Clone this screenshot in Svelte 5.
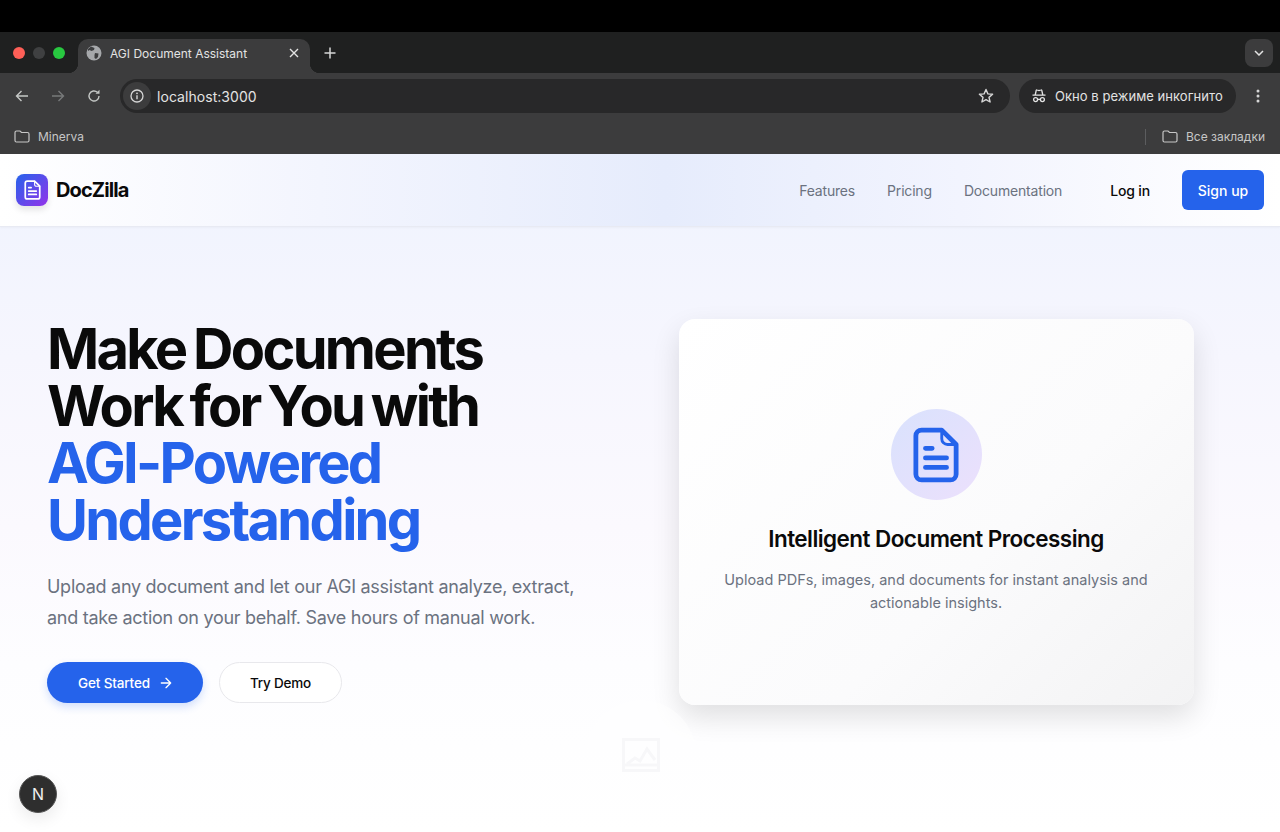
<script>
  const navLinks = ['Features', 'Pricing', 'Documentation'];
</script>

<div class="window">
  <div class="topbar"></div>

  <div class="tabstrip">
    <div class="lights">
      <span class="light red"></span>
      <span class="light grey"></span>
      <span class="light green"></span>
    </div>
    <div class="tab">
      <svg class="globe" width="16" height="16" viewBox="0 0 16 16">
        <circle cx="8" cy="8" r="7.5" fill="#a6a8ab" />
        <path d="M5 1.5 L8.5 3 L8 5 L5.5 6 L3.5 5 L2 6 L2 4 Z M9 8 L12.5 8.5 L12 12 L10 14 L8.5 13 L8.5 10 Z" fill="#3c3d3f" />
      </svg>
      <span class="tab-title">AGI Document Assistant</span>
      <svg class="tab-close" width="10" height="10" viewBox="0 0 10 10">
        <path d="M1 1 L9 9 M9 1 L1 9" stroke="#e3e3e3" stroke-width="1.4" fill="none" />
      </svg>
    </div>
    <svg class="new-tab" width="12" height="12" viewBox="0 0 12 12">
      <path d="M6 0.5 V11.5 M0.5 6 H11.5" stroke="#d6d6d6" stroke-width="1.5" fill="none" />
    </svg>
    <div class="tab-search">
      <svg width="10" height="6" viewBox="0 0 10 6">
        <path d="M1 1 L5 5 L9 1" stroke="#e3e3e3" stroke-width="1.5" fill="none" />
      </svg>
    </div>
  </div>

  <div class="toolbar">
    <svg class="tool" width="14" height="14" viewBox="0 0 14 14">
      <path d="M13 7 H1.5 M6.5 2 L1.5 7 L6.5 12" stroke="#c4c7c5" stroke-width="1.4" fill="none" />
    </svg>
    <svg class="tool" width="14" height="14" viewBox="0 0 14 14">
      <path d="M1 7 H12.5 M7.5 2 L12.5 7 L7.5 12" stroke="#77797a" stroke-width="1.4" fill="none" />
    </svg>
    <svg class="tool" width="14" height="14" viewBox="0 0 14 14">
      <path d="M12 7 A5 5 0 1 1 10.4 3.3" stroke="#c4c7c5" stroke-width="1.4" fill="none" />
      <path d="M12.5 0.8 V4.8 H8.5 Z" fill="#c4c7c5" />
    </svg>
    <div class="omnibox">
      <span class="info">
        <svg width="14" height="14" viewBox="0 0 14 14">
          <circle cx="7" cy="7" r="6" stroke="#d6d6d6" stroke-width="1.3" fill="none" />
          <path d="M7 6.2 V10.2" stroke="#d6d6d6" stroke-width="1.4" />
          <circle cx="7" cy="4.3" r="0.9" fill="#d6d6d6" />
        </svg>
      </span>
      <span class="url">localhost:3000</span>
      <svg class="star" width="16" height="16" viewBox="0 0 16 16">
        <path d="M8 1.5 L9.9 5.9 L14.6 6.3 L11 9.4 L12.1 14 L8 11.6 L3.9 14 L5 9.4 L1.4 6.3 L6.1 5.9 Z" stroke="#d6d6d6" stroke-width="1.4" fill="none" stroke-linejoin="round" />
      </svg>
    </div>
    <div class="incognito">
      <svg width="14" height="14" viewBox="0 0 14 14">
        <path d="M3.2 6 L4.2 1.5 Q4.4 0.8 5 1 L7 1.6 L9 1 Q9.6 0.8 9.8 1.5 L10.8 6 M0.5 6.2 H13.5" stroke="#e3e3e3" stroke-width="1.3" fill="none" />
        <circle cx="3.6" cy="10.6" r="2" stroke="#e3e3e3" stroke-width="1.3" fill="none" />
        <circle cx="10.4" cy="10.6" r="2" stroke="#e3e3e3" stroke-width="1.3" fill="none" />
        <path d="M5.6 10.4 H8.4" stroke="#e3e3e3" stroke-width="1.3" />
      </svg>
      <span>Окно в режиме инкогнито</span>
    </div>
    <svg class="menu" width="4" height="14" viewBox="0 0 4 14">
      <circle cx="2" cy="2" r="1.5" fill="#d6d6d6" />
      <circle cx="2" cy="7" r="1.5" fill="#d6d6d6" />
      <circle cx="2" cy="12" r="1.5" fill="#d6d6d6" />
    </svg>
  </div>

  <div class="bookmarks">
    <svg width="16" height="13" viewBox="0 0 16 13">
      <path d="M1 2.5 A1.5 1.5 0 0 1 2.5 1 H6 L7.5 2.5 H13.5 A1.5 1.5 0 0 1 15 4 V10.5 A1.5 1.5 0 0 1 13.5 12 H2.5 A1.5 1.5 0 0 1 1 10.5 Z" stroke="#c7c7c7" stroke-width="1.2" fill="none" />
    </svg>
    <span class="bm-label">Minerva</span>
    <span class="bm-sep"></span>
    <svg width="16" height="13" viewBox="0 0 16 13">
      <path d="M1 2.5 A1.5 1.5 0 0 1 2.5 1 H6 L7.5 2.5 H13.5 A1.5 1.5 0 0 1 15 4 V10.5 A1.5 1.5 0 0 1 13.5 12 H2.5 A1.5 1.5 0 0 1 1 10.5 Z" stroke="#c7c7c7" stroke-width="1.2" fill="none" />
    </svg>
    <span class="bm-label">Все закладки</span>
  </div>

  <div class="page">
    <header class="nav">
      <div class="brand">
        <span class="logo">
          <svg width="17" height="20" viewBox="0 0 48 58" fill="none" stroke="#fff" stroke-linecap="round" stroke-linejoin="round">
            <path stroke-width="5" d="M9 3H30L45 18V49a6 6 0 0 1-6 6H9a6 6 0 0 1-6-6V9a6 6 0 0 1 6-6z" />
            <path stroke-width="3" d="M30 3v9a6 6 0 0 0 6 6h9" />
            <path stroke-width="5" d="M13 22h7M13 32h22M13 42h22" />
          </svg>
        </span>
        <span class="brand-name">DocZilla</span>
      </div>
      <nav class="links">
        {#each navLinks as link}
          <a href="#top">{link}</a>
        {/each}
      </nav>
      <button class="login">Log in</button>
      <button class="signup">Sign up</button>
    </header>

    <main class="hero">
      <section class="copy">
        <h1>Make Documents Work for You with <span>AGI-Powered Understanding</span></h1>
        <p>Upload any document and let our AGI assistant analyze, extract, and take action on your behalf. Save hours of manual work.</p>
        <div class="actions">
          <button class="primary">
            Get Started
            <svg width="16" height="16" viewBox="0 0 24 24" fill="none" stroke="#fff" stroke-width="2" stroke-linecap="round" stroke-linejoin="round">
              <path d="M5 12h14M12 5l7 7-7 7" />
            </svg>
          </button>
          <button class="secondary">Try Demo</button>
        </div>
      </section>
      <section class="visual">
        <div class="card">
          <span class="badge">
            <svg width="46" height="56" viewBox="0 0 48 58" fill="none" stroke="#2563eb" stroke-linecap="round" stroke-linejoin="round">
              <path stroke-width="5" d="M9 3H30L45 18V49a6 6 0 0 1-6 6H9a6 6 0 0 1-6-6V9a6 6 0 0 1 6-6z" />
              <path stroke-width="3" d="M30 3v9a6 6 0 0 0 6 6h9" />
              <path stroke-width="5" d="M13 22h7M13 32h22M13 42h22" />
            </svg>
          </span>
          <h2>Intelligent Document Processing</h2>
          <p>Upload PDFs, images, and documents for instant analysis and actionable insights.</p>
        </div>
      </section>
    </main>

    <div class="ghost">
      <svg width="38" height="34" viewBox="0 0 38 34" fill="none" stroke="#f7f7f9" stroke-width="3">
        <rect x="1.5" y="1.5" width="35" height="31" />
        <path d="M3 27 H35 M5 26 L13 20 L18 23 L25 11 L33 22" />
      </svg>
    </div>

    <div class="next-badge">N</div>
  </div>
</div>

<style>
  :global(body) {
    margin: 0;
    font-family: Inter, "Liberation Sans", sans-serif;
  }

  .window {
    width: 1280px;
    height: 832px;
    overflow: hidden;
    display: flex;
    flex-direction: column;
    background: #000;
  }

  .topbar {
    height: 32px;
    background: #000;
    flex: none;
  }

  .tabstrip {
    height: 41px;
    flex: none;
    display: flex;
    align-items: center;
    background: #1f2020;
  }

  .lights {
    display: flex;
    gap: 8px;
    padding-left: 13px;
    width: 65px;
    align-items: center;
    flex: none;
  }

  .light {
    width: 12px;
    height: 12px;
    border-radius: 50%;
    flex: none;
  }
  .red { background: #fe5f57; }
  .grey { background: #3f4041; }
  .green { background: #28c840; }

  .tab {
    position: relative;
    width: 232px;
    height: 34px;
    align-self: flex-end;
    box-sizing: border-box;
    padding: 0 11px 6px 8px;
    background: #3c3c3d;
    border-radius: 10px 10px 0 0;
    display: flex;
    align-items: center;
    gap: 8px;
    color: #e3e3e3;
    font-size: 12px;
    flex: none;
  }

  .tab::before,
  .tab::after {
    content: '';
    position: absolute;
    bottom: 0;
    width: 10px;
    height: 10px;
  }

  .tab::before {
    left: -10px;
    background: radial-gradient(circle at 0 0, #1f2020 10px, #3c3c3d 10.5px);
  }

  .tab::after {
    right: -10px;
    background: radial-gradient(circle at 100% 0, #1f2020 10px, #3c3c3d 10.5px);
  }

  .tab-title {
    flex: 1;
  }

  .new-tab {
    margin-left: 14px;
  }

  .tab-search {
    margin-left: auto;
    margin-right: 7px;
    width: 28px;
    height: 28px;
    border-radius: 8px;
    background: #3c3c3d;
    display: flex;
    align-items: center;
    justify-content: center;
  }

  .toolbar {
    height: 46px;
    flex: none;
    display: flex;
    align-items: center;
    background: #3c3c3d;
    padding: 0 19px 0 15px;
    box-sizing: border-box;
  }

  .tool {
    margin-right: 22px;
    flex: none;
  }

  .tool:nth-of-type(3) {
    margin-right: 19px;
  }

  .omnibox {
    width: 890px;
    height: 34px;
    border-radius: 17px;
    background: #282829;
    display: flex;
    align-items: center;
    box-sizing: border-box;
    padding: 0 16px 0 3px;
    color: #e3e3e3;
    font-size: 14px;
    flex: none;
  }

  .info {
    width: 28px;
    height: 28px;
    border-radius: 50%;
    background: #3c3c3d;
    display: flex;
    align-items: center;
    justify-content: center;
    margin-right: 6px;
  }

  .url {
    flex: 1;
    letter-spacing: 0.05px;
  }

  .incognito {
    margin-left: 9px;
    width: 217px;
    height: 34px;
    border-radius: 17px;
    background: #282829;
    display: flex;
    align-items: center;
    box-sizing: border-box;
    padding-left: 13px;
    gap: 9px;
    color: #e3e3e3;
    font-size: 13px;
    letter-spacing: 0.05px;
    flex: none;
  }

  .menu {
    margin-left: 20px;
    flex: none;
  }

  .bookmarks {
    height: 35px;
    flex: none;
    display: flex;
    align-items: center;
    box-sizing: border-box;
    padding: 0 15px 0 14px;
    background: #3c3c3d;
    color: #c7c7c7;
    font-size: 12px;
    gap: 8px;
  }

  .bm-sep {
    width: 1px;
    height: 16px;
    background: #5c5d5f;
    margin-left: auto;
    margin-right: 8px;
  }

  .page {
    position: relative;
    flex: 1;
    display: flex;
    flex-direction: column;
    background: linear-gradient(180deg, #eff3fe 0%, #f6f6fe 30%, #fbf9fe 55%, #fdfdff 75%, #ffffff 100%);
    color: #0a0a0a;
  }

  .nav {
    height: 73px;
    flex: none;
    box-sizing: border-box;
    display: flex;
    align-items: center;
    padding: 0 16px;
    background: linear-gradient(90deg, #ffffff 0%, #f3f5fe 25%, #e6ecfc 52%, #f2f4fe 75%, #ffffff 100%);
    border-bottom: 1px solid #e8eaf3;
    box-shadow: 0 1px 2px rgba(0, 0, 0, 0.03);
  }

  .brand {
    display: flex;
    align-items: center;
    gap: 8px;
    margin-right: auto;
  }

  .logo {
    width: 32px;
    height: 32px;
    border-radius: 8px;
    background: linear-gradient(135deg, #2563eb, #9333ea);
    display: flex;
    align-items: center;
    justify-content: center;
    box-shadow: 0 4px 6px rgba(0, 0, 0, 0.1);
  }

  .brand-name {
    font-size: 20px;
    font-weight: 700;
    letter-spacing: -0.9px;
  }

  .links {
    display: flex;
    gap: 32px;
    margin-right: 32px;
  }

  .links a {
    font-size: 14px;
    color: #6b7280;
    font-weight: 400;
    letter-spacing: -0.18px;
    text-decoration: none;
  }

  button {
    font-family: inherit;
    cursor: pointer;
    border: none;
  }

  .login {
    height: 40px;
    padding: 0 16px;
    background: none;
    font-size: 14px;
    font-weight: 500;
    letter-spacing: -0.15px;
    color: #0a0a0a;
    margin-right: 16px;
  }

  .signup {
    width: 82px;
    height: 40px;
    border-radius: 6px;
    background: #2563eb;
    color: #fff;
    font-size: 14px;
    font-weight: 500;
  }

  .hero {
    display: grid;
    grid-template-columns: 593px 592px;
    padding: 92px 48px 0 47px;
  }

  .copy h1 {
    margin: 2px 0 0;
    width: 544px;
    font-size: 56px;
    line-height: 57px;
    font-weight: 700;
    letter-spacing: -2.7px;
    word-spacing: -3px;
    color: #0a0a0a;
  }

  .copy h1 span {
    color: #2563eb;
    display: block;
    width: 440px;
  }

  .copy p {
    margin: 22px 0 0;
    width: 544px;
    font-size: 18px;
    line-height: 31px;
    letter-spacing: -0.27px;
    color: #6b7280;
  }

  .actions {
    display: flex;
    gap: 16px;
    margin-top: 29px;
  }

  .primary {
    width: 156px;
    height: 41px;
    border-radius: 21px;
    background: #2563eb;
    color: #fff;
    font-size: 13.5px;
    font-weight: 500;
    letter-spacing: -0.15px;
    display: flex;
    align-items: center;
    justify-content: center;
    gap: 8px;
    padding-left: 8px;
    box-shadow: 0 4px 8px rgba(37, 99, 235, 0.2);
  }

  .secondary {
    width: 123px;
    height: 41px;
    border-radius: 21px;
    background: #fff;
    border: 1px solid #e8e8ec;
    color: #0a0a0a;
    font-size: 13.5px;
    font-weight: 500;
    letter-spacing: -0.2px;
  }

  .visual {
    display: flex;
    justify-content: center;
  }

  .card {
    width: 515px;
    height: 386px;
    border-radius: 16px;
    background: linear-gradient(135deg, #ffffff 0%, #fbfbfc 60%, #f3f3f4 100%);
    box-shadow: 0 12px 28px rgba(0, 0, 0, 0.12);
    display: flex;
    flex-direction: column;
    align-items: center;
    box-sizing: border-box;
    padding-top: 90px;
  }

  .badge {
    width: 91px;
    height: 91px;
    border-radius: 50%;
    background: linear-gradient(135deg, #d9e2fd, #ece0fc);
    display: flex;
    align-items: center;
    justify-content: center;
  }

  .card h2 {
    margin: 24px 0 0;
    font-size: 22.5px;
    line-height: 30px;
    font-weight: 600;
    letter-spacing: -0.56px;
  }

  .card p {
    margin: 14px 0 0;
    width: 440px;
    text-align: center;
    font-size: 14.5px;
    line-height: 23px;
    color: #6b7280;
  }

  .ghost {
    position: absolute;
    left: 586px;
    top: 546px;
    width: 110px;
    height: 110px;
    border-radius: 50%;
    background: rgba(255, 255, 255, 0.45);
    display: flex;
    align-items: center;
    justify-content: center;
  }

  .next-badge {
    position: absolute;
    left: 19px;
    top: 621px;
    width: 38px;
    height: 38px;
    border-radius: 50%;
    background: #2e2e2e;
    border: 1px solid #555;
    box-sizing: border-box;
    color: #f0f0f0;
    font-size: 16px;
    font-weight: 400;
    display: flex;
    align-items: center;
    justify-content: center;
    box-shadow: 0 6px 16px rgba(0, 0, 0, 0.08);
  }
</style>
